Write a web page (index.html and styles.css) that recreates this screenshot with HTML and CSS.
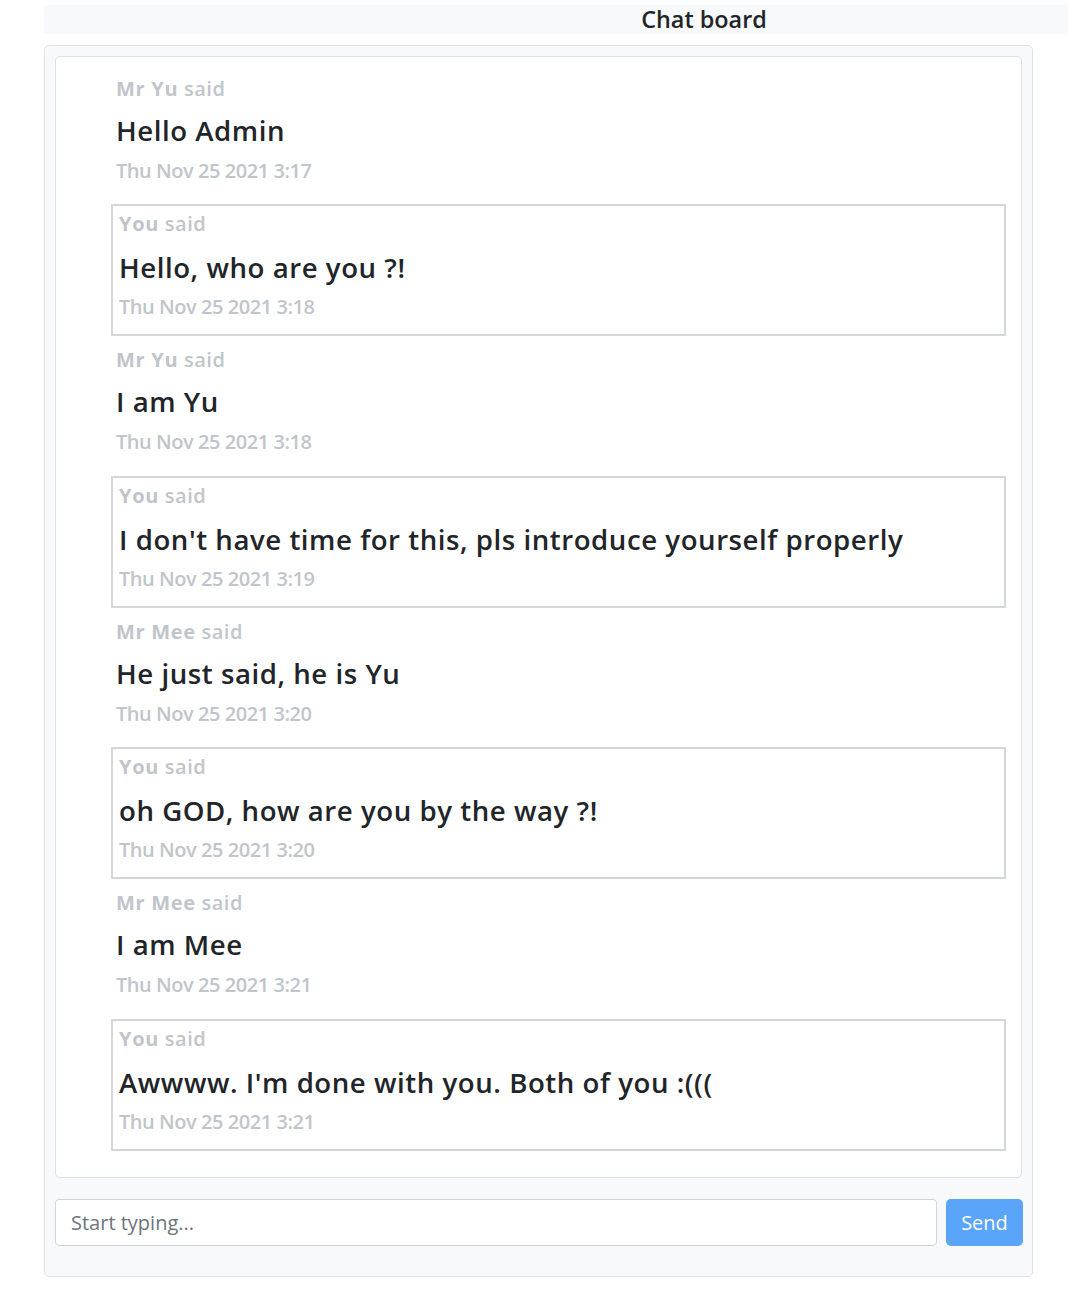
FILE: index.html
```html
<!DOCTYPE html>
<html lang="en">
<head>
<meta charset="utf-8">
<title>Chat board</title>
<link rel="stylesheet" href="styles.css">
</head>
<body>
<header class="topbar"><h4 class="title">Chat board</h4></header>
<main class="card">
  <section class="board">
    <div class="msg other">
      <div class="who"><b>Mr Yu</b> said</div>
      <div class="text">Hello Admin</div>
      <div class="when">Thu Nov 25 2021 3:17</div>
    </div>
    <div class="msg mine">
      <div class="who"><b>You</b> said</div>
      <div class="text">Hello, who are you ?!</div>
      <div class="when">Thu Nov 25 2021 3:18</div>
    </div>
    <div class="msg other">
      <div class="who"><b>Mr Yu</b> said</div>
      <div class="text">I am Yu</div>
      <div class="when">Thu Nov 25 2021 3:18</div>
    </div>
    <div class="msg mine">
      <div class="who"><b>You</b> said</div>
      <div class="text">I don't have time for this, pls introduce yourself properly</div>
      <div class="when">Thu Nov 25 2021 3:19</div>
    </div>
    <div class="msg other">
      <div class="who"><b>Mr Mee</b> said</div>
      <div class="text">He just said, he is Yu</div>
      <div class="when">Thu Nov 25 2021 3:20</div>
    </div>
    <div class="msg mine">
      <div class="who"><b>You</b> said</div>
      <div class="text">oh GOD, how are you by the way ?!</div>
      <div class="when">Thu Nov 25 2021 3:20</div>
    </div>
    <div class="msg other">
      <div class="who"><b>Mr Mee</b> said</div>
      <div class="text">I am Mee</div>
      <div class="when">Thu Nov 25 2021 3:21</div>
    </div>
    <div class="msg mine">
      <div class="who"><b>You</b> said</div>
      <div class="text">Awwww. I'm done with you. Both of you :(((</div>
      <div class="when">Thu Nov 25 2021 3:21</div>
    </div>
  </section>
  <form class="composer">
    <input class="field" type="text" placeholder="Start typing...">
    <button class="send" type="button">Send</button>
  </form>
</main>
</body>
</html>
```
FILE: styles.css
```css
* { box-sizing: border-box; }
html, body { margin: 0; padding: 0; }
body {
  font-family: "Open Sans", "Noto Sans", sans-serif;
  color: #212529;
  background: #fff;
  width: 1068px;
  overflow-x: hidden;
}
.topbar {
  margin: 5px 0 0 44px;
  width: 1024px;
  height: 29px;
  background: #f8f9fa;
  display: flex;
  justify-content: center;
  padding-left: 296px;
}
.title {
  margin: 0;
  font-size: 23.4px;
  font-weight: 600;
  line-height: 29px;
}
.card {
  margin: 11px 0 0 44px;
  width: 989px;
  background: #f8f9fa;
  border: 1px solid #dee2e6;
  border-radius: 5px;
  padding: 10px 10px 30px 10px;
}
.board {
  background: #fff;
  border: 1px solid #dee2e6;
  border-radius: 5px;
  padding: 11.5px 15px 26px 55px;
  display: flex;
  flex-direction: column;
  gap: 3.8px;
}
.msg {
  height: 132px;
  border: 1px solid transparent;
  padding: 7px 7px 0 4px;
}
.msg.mine {
  border-color: #d3d7db;
  padding-left: 6px;
  border-width: 2px;
  padding-top: 6px;
}
.who {
  font-size: 20px;
  line-height: 24px;
  color: #bfc5cb;
  font-weight: 600;
  letter-spacing: 0.5px;
}
.who b { font-weight: 700; letter-spacing: 0.7px; }
.text {
  margin-top: 12px;
  font-size: 27.6px;
  line-height: 34px;
  font-weight: 600;
  letter-spacing: 0.55px;
  color: #212529;
  white-space: nowrap;
}
.mine .text { margin-top: 14px; }
.when {
  margin-top: 12px;
  font-size: 20px;
  line-height: 24px;
  font-weight: 600;
  letter-spacing: -0.45px;
  color: #bfc5cb;
}
.mine .when { margin-top: 11px; }
.composer {
  margin: 21px -1px 0 0;
  display: flex;
  gap: 9px;
}
.field {
  flex: 0 0 882px;
  height: 47px;
  border: 1px solid #ced4da;
  border-radius: 4px;
  padding: 0 15px;
  font-family: inherit;
  font-size: 20px;
  color: #495057;
  background: #fff;
}
.field::placeholder { color: #6c757d; }
.send {
  flex: 0 0 77px;
  height: 47px;
  border: none;
  border-radius: 5px;
  background: #5aa5fa;
  color: #fff;
  font-family: inherit;
  font-size: 20px;
}
```
